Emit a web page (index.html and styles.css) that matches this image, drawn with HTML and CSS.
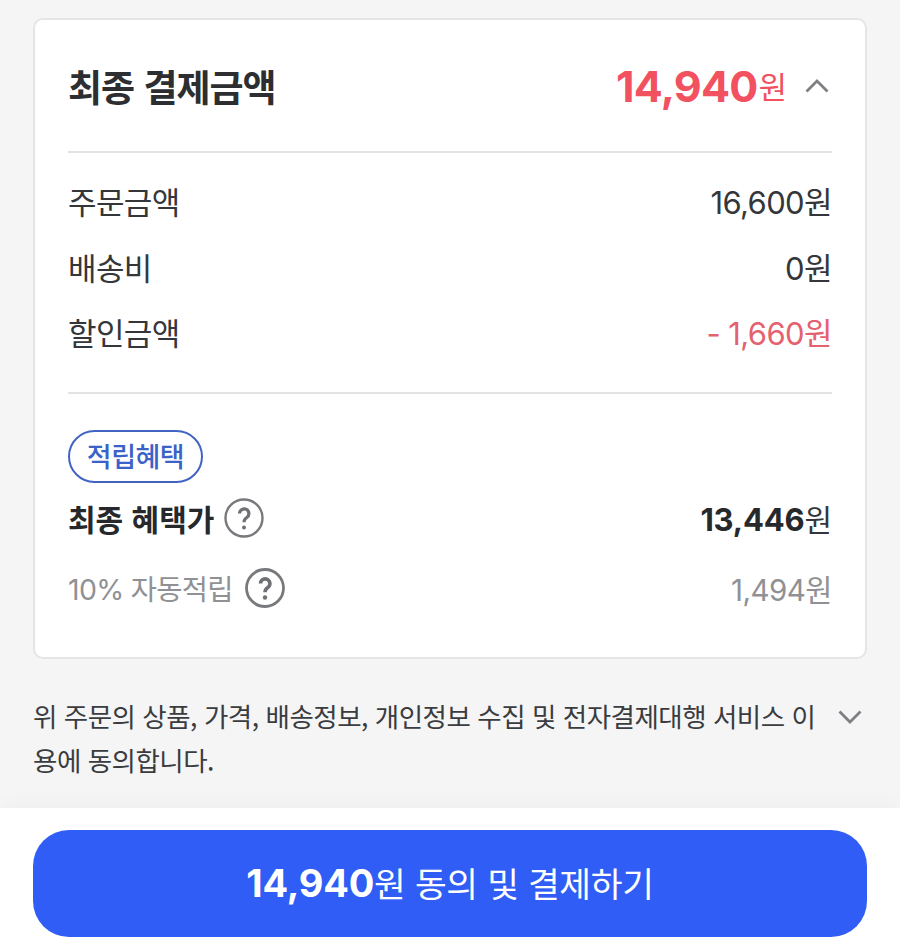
FILE: index.html
```html
<!DOCTYPE html>
<html lang="ko">
<head>
<meta charset="utf-8">
<title>최종 결제금액</title>
<link rel="stylesheet" href="styles.css">
</head>
<body>
<main class="content">
  <section class="card">
    <header class="head">
      <h2 class="title">최종 결제금액</h2>
      <div class="total">
        <span class="total-num">14,940</span><span class="total-unit">원</span>
        <svg class="chev-up" width="26" height="16" viewBox="0 0 26 16"><path d="M2.500 13.500 L13 3 L23.500 13.500" fill="none" stroke="#7d7f82" stroke-width="2.800"/></svg>
      </div>
    </header>
    <div class="rows">
      <div class="row"><span>주문금액</span><span>16,600원</span></div>
      <div class="row"><span>배송비</span><span>0원</span></div>
      <div class="row"><span>할인금액</span><span class="minus">- 1,660원</span></div>
    </div>
    <div class="benefit">
      <span class="badge">적립혜택</span>
      <div class="row-final">
        <span class="final-label">최종 혜택가
          <svg class="q" width="40" height="40" viewBox="0 0 40 40"><circle cx="20" cy="20" r="18.500" fill="none" stroke="#77797c" stroke-width="2.400"/><path d="M15.500 15.500 a4.700 4.700 0 1 1 7.300 4 c-1.800 1.200 -2.800 2.200 -2.800 4.700" fill="none" stroke="#6f7174" stroke-width="3.200"/><circle cx="20" cy="29.500" r="2" fill="#6f7174"/></svg>
        </span>
        <span class="final-val"><b>13,446</b>원</span>
      </div>
      <div class="row-auto">
        <span class="auto-label">10% 자동적립
          <svg class="q" width="40" height="40" viewBox="0 0 40 40"><circle cx="20" cy="20" r="18.500" fill="none" stroke="#77797c" stroke-width="2.800"/><path d="M15.500 15.500 a4.700 4.700 0 1 1 7.300 4 c-1.800 1.200 -2.800 2.200 -2.800 4.700" fill="none" stroke="#6f7174" stroke-width="3.600"/><circle cx="20" cy="29.500" r="2.200" fill="#6f7174"/></svg>
        </span>
        <span class="auto-val">1,494원</span>
      </div>
    </div>
  </section>
  <div class="agree">
    <p class="agree-text">위 주문의 상품, 가격, 배송정보, 개인정보 수집 및 전자결제대행 서비스 이용에 동의합니다.</p>
    <svg class="chev-down" width="26" height="16" viewBox="0 0 26 16"><path d="M2.500 2.500 L13 13 L23.500 2.500" fill="none" stroke="#7d7f82" stroke-width="2.800"/></svg>
  </div>
</main>
<footer class="foot">
  <button class="pay"><b>14,940</b>원 동의 및 결제하기</button>
</footer>
</body>
</html>
```
FILE: styles.css
```css
* { box-sizing: border-box; }
html, body { margin: 0; padding: 0; }
body {
  width: 900px;
  height: 939px;
  overflow: hidden;
  background: #f5f5f6;
  font-family: "Noto Sans CJK KR", "Noto Sans", sans-serif;
  color: #2b2d30;
  display: flex;
  flex-direction: column;
}
.content { padding: 18px 33px 0 33px; height: 808px; flex: none; }
.card {
  background: #fff;
  border: 2px solid #e4e5e7;
  border-radius: 10px;
  height: 641px;
  padding: 0 33px;
}
.head {
  height: 133px;
  border-bottom: 2px solid #e3e3e5;
  display: flex;
  justify-content: space-between;
  align-items: center;
}
.title { margin: 0; font-size: 37px; font-weight: 700; letter-spacing: -1px; line-height: 44px; color: #2c2e31; }
.total { display: flex; align-items: center; color: #f2525f; }
.total-num { font-family: Inter, sans-serif; font-size: 43px; font-weight: 700; line-height: 50px; letter-spacing: -.75px; }
.total-unit { font-size: 31px; line-height: 50px; margin-left: 1px; }
.chev-up { margin-left: 17px; margin-right: 2px; }
.rows { padding: 15px 0 27px; border-bottom: 2px solid #e3e3e5; }
.row {
  height: 65.500px;
  display: flex;
  justify-content: space-between;
  align-items: center;
  font-family: Inter, "Noto Sans CJK KR", sans-serif;
  font-size: 31px;
  letter-spacing: -.6px;
  color: #34363a;
}
.minus { color: #e4626f; }
.benefit { padding-top: 36px; }
.badge {
  display: block;
  width: 135px;
  height: 53px;
  border: 2px solid #3f64c4;
  border-radius: 27px;
  color: #3a62c8;
  font-size: 27px;
  line-height: 47px;
  text-align: center;
  letter-spacing: -.5px;
  font-weight: 500;
}
.row-final, .row-auto { display: flex; justify-content: space-between; align-items: center; }
.row-final { height: 44px; margin-top: 13px; font-size: 30px; }
.final-label, .auto-label { display: flex; align-items: center; }
.final-label { font-weight: 700; color: #26282b; gap: 10px; }
.final-val { color: #34363a; }
.final-val b { font-family: Inter, sans-serif; font-size: 31px; letter-spacing: -.2px; color: #26282b; }
.row-auto {
  height: 44px;
  margin-top: 26px;
  font-family: Inter, "Noto Sans CJK KR", sans-serif;
  font-size: 28.500px;
  color: #8f9194;
  letter-spacing: -.7px;
}
.auto-val { font-size: 29.500px; letter-spacing: -.5px; }
.auto-label { gap: 12px; }
.agree { display: flex; align-items: flex-start; justify-content: space-between; padding-top: 35px; }
.agree-text {
  margin: 0;
  width: 790px;
  font-size: 26.500px;
  line-height: 44px;
  color: #3a3c40;
  letter-spacing: -.5px;
  word-break: break-all;
}
.chev-down { margin-top: 15px; margin-right: 4px; flex: none; }
.foot { flex: 1; background: #fff; padding: 22px 33px 0; box-shadow: 0 -6px 18px rgba(0, 0, 0, .025); }
.pay {
  display: block;
  width: 834px;
  height: 107px;
  border: 0;
  padding: 0 0 4px;
  border-radius: 36px;
  background: #2f5df5;
  color: #fff;
  font-family: "Noto Sans CJK KR", sans-serif;
  font-size: 34.500px;
  letter-spacing: -.3px;
}
.pay b { font-family: Inter, sans-serif; font-size: 38px; letter-spacing: -.2px; }
```
